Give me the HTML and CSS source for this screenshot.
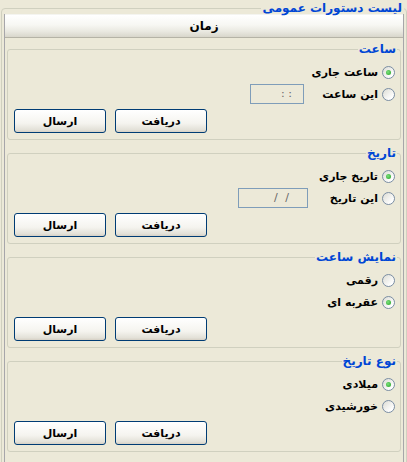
FILE: index.html
```html
<!DOCTYPE html>
<html lang="fa" dir="rtl">
<head>
<meta charset="UTF-8" />
<meta name="viewport" content="width=device-width, initial-scale=1" />
<title>لیست دستورات عمومی</title>
<link rel="stylesheet" href="styles.css">
</head>
<body>
  <fieldset class="group">
    <legend>لیست دستورات عمومی</legend>
    <div class="panel">
      <div class="panel-head">زمان</div>
      <div class="panel-body">

        <fieldset class="box">
          <legend>ساعت</legend>
          <label class="option"><span class="radio checked"></span><span class="caption">ساعت جاری</span></label>
          <label class="option"><span class="radio"></span><span class="caption">این ساعت</span><span class="field field-time">: :</span></label>
          <div class="actions">
            <button class="btn">دریافت</button>
            <button class="btn">ارسال</button>
          </div>
        </fieldset>

        <fieldset class="box">
          <legend>تاریخ</legend>
          <label class="option"><span class="radio checked"></span><span class="caption">تاریخ جاری</span></label>
          <label class="option"><span class="radio"></span><span class="caption">این تاریخ</span><span class="field field-date">/ /</span></label>
          <div class="actions">
            <button class="btn">دریافت</button>
            <button class="btn">ارسال</button>
          </div>
        </fieldset>

        <fieldset class="box">
          <legend>نمایش ساعت</legend>
          <label class="option"><span class="radio"></span><span class="caption">رقمی</span></label>
          <label class="option"><span class="radio checked"></span><span class="caption">عقربه ای</span></label>
          <div class="actions">
            <button class="btn">دریافت</button>
            <button class="btn">ارسال</button>
          </div>
        </fieldset>

        <fieldset class="box">
          <legend>نوع تاریخ</legend>
          <label class="option"><span class="radio checked"></span><span class="caption">میلادی</span></label>
          <label class="option"><span class="radio"></span><span class="caption">خورشیدی</span></label>
          <div class="actions">
            <button class="btn">دریافت</button>
            <button class="btn">ارسال</button>
          </div>
        </fieldset>

      </div>
    </div>
  </fieldset>
</body>
</html>
```

FILE: styles.css
```css
:root {
  --xp-bg: #ece9d8;
  --xp-title: #0046d5;
  --xp-group-border: #d0d0bf;
  --xp-btn-border: #003c74;
  --xp-field-border: #7f9db9;
}
* {
  box-sizing: border-box;
}
html, body {
  height: 100%;
}
body {
  margin: 0;
  background-color: var(--xp-bg);
  font-family: "DejaVu Sans", sans-serif;
  font-size: 11px;
  color: #000;
  overflow: hidden;
}

/* grupo externo */
fieldset.group {
  margin: 2px 0 0 1px;
  padding: 0 2px;
  border: 1px solid var(--xp-group-border);
  border-radius: 4px;
  min-width: 0;
  height: 470px;
}
fieldset.group > legend {
  padding: 0 2px;
  font-size: 12px;
  font-weight: bold;
  line-height: 12px;
  color: var(--xp-title);
}

.panel {
  border-left: 1px solid #a7a6aa;
  border-right: 1px solid #a7a6aa;
  height: 100%;
}
.panel-head {
  height: 24px;
  line-height: 23px;
  text-align: center;
  font-weight: bold;
  font-size: 12px;
  background: linear-gradient(#ffffff, #f7f7f3 45%, #e9e8e0 75%, #d8d6cb);
  border-top: 1px solid #f4f4f0;
  border-bottom: 1px solid #b5b3a6;
}
.panel-body {
  padding: 4px 2px 0 2px;
}

/* caixas de opções */
fieldset.box {
  margin: 0 0 6px 0;
  padding: 5px 5px 6px 6px;
  border: 1px solid var(--xp-group-border);
  border-radius: 3px;
  min-width: 0;
}
fieldset.box > legend {
  padding: 0 1px;
  margin-right: -2px;
  font-size: 12px;
  font-weight: bold;
  line-height: 14px;
  color: var(--xp-title);
}

.option {
  display: flex;
  align-items: center;
  height: 22px;
  font-weight: bold;
}
.radio {
  width: 13px;
  height: 13px;
  border-radius: 50%;
  border: 1px solid #7a8da3;
  background: linear-gradient(135deg, #dcdcd4, #ffffff 80%);
  display: flex;
  align-items: center;
  justify-content: center;
  flex-shrink: 0;
}
.radio.checked::after {
  content: "";
  width: 5px;
  height: 5px;
  border-radius: 50%;
  background: radial-gradient(circle at 40% 40%, #7ce07c, #21a121);
}
.caption {
  margin-right: 4px;
  width: 70px;
  white-space: nowrap;
}
.field {
  height: 20px;
  border: 1px solid var(--xp-field-border);
  color: #666;
  font-weight: normal;
  line-height: 18px;
  text-align: right;
}
.field-time {
  width: 54px;
  margin-right: 4px;
  padding-right: 11px;
}
.field-date {
  width: 70px;
  padding-right: 16px;
  letter-spacing: 2px;
}

.actions {
  display: flex;
  justify-content: flex-end;
  gap: 9px;
  margin-top: 4px;
}
.btn {
  width: 92px;
  height: 24px;
  padding: 0;
  border: 1px solid var(--xp-btn-border);
  border-radius: 3px;
  background: linear-gradient(#ffffff, #f5f4ef 60%, #e3e1d8 90%, #d6d0c5);
  font-family: "DejaVu Sans", sans-serif;
  font-size: 11px;
  font-weight: bold;
  color: #000;
}
```
